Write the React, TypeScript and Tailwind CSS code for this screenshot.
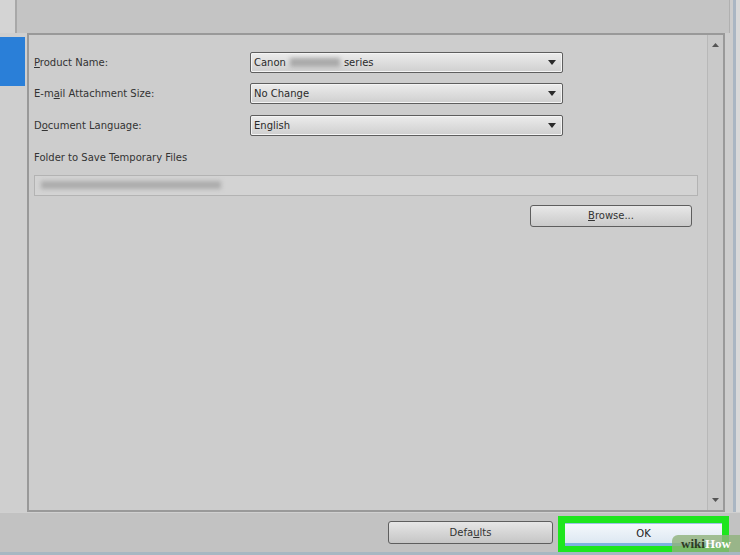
import React from "react";

const font = { fontFamily: '"DejaVu Sans", "Liberation Sans", sans-serif' };

function Select({ children }: { children: React.ReactNode }) {
  return (
    <div className="w-[313px] h-[21px] rounded-[2px] border border-[#5e5e5e] bg-gradient-to-b from-[#ececec] to-[#cfcfcf] flex items-center pl-[3px] pr-[6px] shadow-[inset_0_0_0_1px_#f4f4f4]">
      <div className="flex-1 flex items-center text-[10px] text-[#2a2a2a]">{children}</div>
      <svg width="8" height="5" viewBox="0 0 8 5"><path d="M0 0 L8 0 L4 5 Z" fill="#2b2b2b" /></svg>
    </div>
  );
}

function Label({ children }: { children: React.ReactNode }) {
  return <div className="w-[216px] text-[10px] text-[#333]">{children}</div>;
}

export default function App() {
  return (
    <div className="w-[740px] h-[555px] bg-[#c9c9c9] flex flex-col overflow-hidden" style={font}>
      {/* top */}
      <div className="h-[33px] flex">
        <div className="w-[17px] bg-[#d4d4d4] border-r-2 border-[#a8a8a8]" />
        <div className="flex-1 bg-[#c4c4c4] border-r border-[#b0b0b0]" />
        <div className="w-[10px] flex">
          <div className="w-[3px] bg-[#cdcdcd]" />
          <div className="w-[3px] bg-[#aab6c3]" />
          <div className="flex-1 bg-[#d9d9d9]" />
        </div>
      </div>
      {/* middle */}
      <div className="h-[480px] flex">
        <div className="w-[27px] bg-[#cfcfcf] flex flex-col">
          <div className="mt-[4px] h-[49px] w-[25px] bg-[#2a7fd8]" />
        </div>
        <div className="w-[698px] border-2 border-[#999999] bg-[#cdcdcd] flex">
          <div className="flex-1 pl-[5px] pt-[17px] flex flex-col">
            <div className="flex items-center">
              <Label><span className="underline">P</span>roduct Name:</Label>
              <Select>
                <span>Canon</span>
                <span className="inline-block w-[50px] h-[9px] mx-[4px] bg-[#a9a9a9] blur-[2px]" />
                <span>series</span>
              </Select>
            </div>
            <div className="flex items-center mt-[10px]">
              <Label>E-m<span className="underline">a</span>il Attachment Size:</Label>
              <Select>No Change</Select>
            </div>
            <div className="flex items-center mt-[11px]">
              <Label>D<span className="underline">o</span>cument Language:</Label>
              <Select>English</Select>
            </div>
            <div className="mt-[14px] text-[10px] text-[#333]">Folder to Save Temporary Files</div>
            <div className="mt-[10px] mr-[9px] h-[21px] border border-[#b3b3b3] bg-[#d3d3d3] flex items-center pl-[6px]">
              <div className="w-[180px] h-[8px] bg-[#acacac] blur-[2px]" />
            </div>
            <div className="mt-[9px] mr-[15px] flex justify-end">
              <div className="w-[162px] h-[22px] rounded-[3px] border border-[#5e5e5e] bg-gradient-to-b from-[#e8e8e8] to-[#cacaca] flex items-center justify-center text-[10px] text-[#333]">
                <span><span className="underline">B</span>rowse...</span>
              </div>
            </div>
          </div>
          {/* scrollbar */}
          <div className="w-[16px] border-l border-[#b8b8b8] bg-[#c9c9c9] flex flex-col items-center justify-between py-[8px]">
            <svg width="7" height="4" viewBox="0 0 7 4"><path d="M0 4 L7 4 L3.5 0 Z" fill="#555" /></svg>
            <svg width="7" height="4" viewBox="0 0 7 4"><path d="M0 0 L7 0 L3.5 4 Z" fill="#555" /></svg>
          </div>
        </div>
        <div className="w-[15px] flex">
          <div className="w-[8px] bg-[#cdcdcd]" />
          <div className="w-[3px] bg-[#aab6c3]" />
          <div className="flex-1 bg-[#d9d9d9]" />
        </div>
      </div>
      {/* bottom */}
      <div className="flex-1 bg-[#c2c2c2] border-t border-[#d0d0d0] border-b-[3px] border-b-[#a7b7c2] flex items-start relative">
        <div className="ml-[388px] mt-[8px] w-[165px] h-[23px] rounded-[3px] border border-[#5e5e5e] bg-gradient-to-b from-[#e6e6e6] to-[#c6c6c6] flex items-center justify-center text-[10px] text-[#333]">
          <span>Defa<span className="underline">u</span>lts</span>
        </div>
        <div className="ml-[5px] mt-[3px] w-[171px] h-[36px] bg-[#1ee61e] flex items-center justify-center">
          <div className="w-[157px] h-[23px] bg-gradient-to-b from-[#f4f8fc] to-[#dde8f2] border-b-[3px] border-[#7fb2e0] border-t border-t-[#9cc4e8] flex items-center justify-center text-[10px] text-[#222]">
            OK
          </div>
        </div>
        <div className="absolute right-0 bottom-0 h-[17px] w-[68px] bg-[#8fb27a]/80 rounded-tl-[6px] flex items-center justify-center text-[13px] font-bold" style={{ fontFamily: '"Liberation Serif", serif' }}>
          <span className="text-[#2d3b22]">wiki</span><span className="text-white">How</span>
        </div>
      </div>
    </div>
  );
}
